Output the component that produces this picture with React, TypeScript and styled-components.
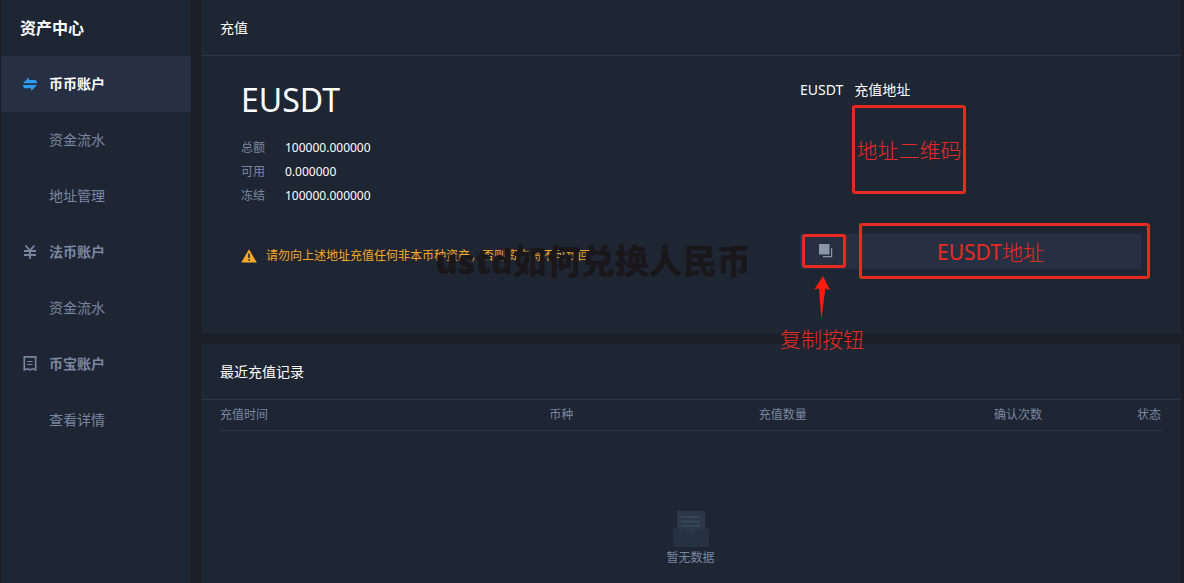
import React from "react";
import styled, { createGlobalStyle } from "styled-components";

const color = {
  page: "#1b1e27",
  panel: "#1e2634",
  raised: "#263042",
  line: "#2a3646",
  muted: "#7a86a0",
  text: "#ffffff",
  warn: "#f9a825",
  mark: "#ea2a20",
};

const markFont = `"Noto Sans", "Noto Sans CJK SC Light", "Noto Sans CJK SC", sans-serif`;

const GlobalStyle = createGlobalStyle`
  * { box-sizing: border-box; }
  body {
    margin: 0;
    background: ${color.page};
    color: ${color.text};
    font-family: "Noto Sans", "Noto Sans CJK SC", sans-serif;
    font-size: 14px;
  }
`;

const Page = styled.div`
  display: flex;
  gap: 10px;
  min-height: 100vh;
  padding: 0 3px 0 1px;
`;

const Sidebar = styled.nav`
  flex: 0 0 190px;
  background: ${color.panel};
`;

const SidebarTitle = styled.h1`
  margin: 0;
  padding-left: 19px;
  font-size: 16px;
  font-weight: 700;
  line-height: 56px;
`;

const NavItem = styled.a<{ $active?: boolean; $sub?: boolean }>`
  display: flex;
  align-items: center;
  gap: 12px;
  height: 56px;
  padding-bottom: 1px;
  padding-left: ${(p) => (p.$sub ? 48 : 22)}px;
  background: ${(p) => (p.$active ? color.raised : "transparent")};
  color: ${(p) => (p.$active ? color.text : color.muted)};
  font-weight: ${(p) => (p.$sub ? 400 : 700)};
  line-height: 20px;
  text-decoration: none;
`;

const Main = styled.main`
  flex: 1;
  min-width: 0;
  display: flex;
  flex-direction: column;
  gap: 10px;
`;

const Panel = styled.section<{ $grow?: boolean }>`
  flex: ${(p) => (p.$grow ? "1 0 auto" : "0 0 auto")};
  background: ${color.panel};
`;

const PanelTitle = styled.h2`
  margin: 0;
  padding: 0 19px;
  border-bottom: 1px solid ${color.line};
  font-size: 14px;
  font-weight: 400;
  line-height: 55px;
`;

const Deposit = styled.div`
  display: flex;
  justify-content: space-between;
  padding: 24px 40px 65px;
`;

const Coin = styled.h3`
  margin: 0 0 16px;
  font-size: 32px;
  font-weight: 400;
  line-height: 40px;
`;

const Balances = styled.dl`
  display: grid;
  grid-template-columns: 44px auto;
  margin: 0;
  font-size: 12px;
  line-height: 24px;
  dt { color: ${color.muted}; }
  dd { margin: 0; }
`;

const Warning = styled.p`
  position: relative;
  display: flex;
  align-items: center;
  gap: 9px;
  margin: 36px 0 0;
  color: ${color.warn};
  font-size: 12px;
  line-height: 24px;
  white-space: nowrap;
`;

const Watermark = styled.span`
  position: absolute;
  left: 194px;
  top: -8px;
  color: #1a171b;
  font-size: 34px;
  font-weight: 900;
  line-height: 50px;
`;

const AddressColumn = styled.div`
  flex: 0 0 341px;
  min-width: 0;
`;

const Caption = styled.div`
  display: flex;
  gap: 11px;
  line-height: 20px;
`;

const MarkText = styled.span`
  color: ${color.mark};
  font-family: ${markFont};
  font-size: 21px;
  line-height: 30px;
  white-space: nowrap;
`;

const QrFrame = styled.div`
  display: flex;
  align-items: center;
  justify-content: center;
  width: 114px;
  height: 89px;
  margin: 5px 0 40px 52px;
  border: 3px solid ${color.mark};
  border-radius: 3px;
`;

const AddressRow = styled.div`
  position: relative;
  display: flex;
  height: 35px;
  background: ${color.raised};
`;

const CopyButton = styled.button`
  display: flex;
  flex: 0 0 44px;
  align-items: center;
  justify-content: center;
  height: 34px;
  margin-left: 2px;
  padding: 0 0 0 4px;
  border: 3px solid ${color.mark};
  border-radius: 3px;
  background: none;
  cursor: pointer;
`;

const AddressInput = styled.input`
  flex: 1;
  min-width: 0;
  padding: 0 30px 2px 24px;
  border: 0;
  outline: 0;
  background: none;
  color: ${color.mark};
  font-family: ${markFont};
  font-size: 21px;
  text-align: center;
`;

const AddressFrame = styled.div`
  position: absolute;
  inset: -11px -9px -10px 59px;
  border: 3px solid ${color.mark};
  border-radius: 3px;
  pointer-events: none;
`;

const CopyNote = styled.div`
  position: absolute;
  top: 42px;
  left: -20px;
  display: flex;
  flex-direction: column;
  align-items: center;
  gap: 5px;
`;

const TableWrap = styled.div`
  padding: 0 20px 0 19px;
`;

const Records = styled.table`
  width: 100%;
  table-layout: fixed;
  border-spacing: 0;
  font-size: 12px;
`;

const HeadCell = styled.th<{ $width?: string; $end?: boolean }>`
  width: ${(p) => p.$width ?? "auto"};
  height: 31px;
  padding: 0;
  border-bottom: 1px solid ${color.line};
  color: ${color.muted};
  font-weight: 400;
  line-height: 18px;
  text-align: ${(p) => (p.$end ? "right" : "left")};
`;

const Empty = styled.div`
  display: flex;
  flex-direction: column;
  align-items: center;
  padding: 80px 0 14px;
  color: ${color.muted};
  font-size: 12px;
  line-height: 22px;
`;

const TransferIcon = () => (
  <svg width="14" height="14" viewBox="0 0 14 14" fill="#2e9df0" aria-hidden="true">
    <path d="M0 6.3 L5.8 0.2 V3 H12.4 L14 4.4 V6.3Z" />
    <path d="M14 7.9 L8.2 14 V11.2 H1.6 L0 9.6 V7.9Z" />
  </svg>
);

const YenIcon = () => (
  <svg width="14" height="14" viewBox="0 0 14 14" fill="none" stroke={color.muted} strokeWidth="1.8" aria-hidden="true">
    <path d="M2.5 0.5 L7 5.5 L11.5 0.5 M7 5.5 V14.5 M1 6 H13 M1 10 H13" />
  </svg>
);

const ReceiptIcon = () => (
  <svg width="14" height="15" viewBox="0 0 14 15" fill="none" stroke={color.muted} aria-hidden="true">
    <path strokeWidth="1.6" d="M1.3 0.9 H12.7 V14 L9.8 12.8 L7 13.8 L4.2 12.8 L1.3 14Z" />
    <path strokeWidth="1.2" d="M4.2 5.5 H9.6 M4.2 8.5 H9.6" />
  </svg>
);

const WarningIcon = () => (
  <svg width="16" height="14" viewBox="0 0 16 14" aria-hidden="true">
    <path fill={color.warn} d="M8 0.3 L15.8 13.6 H0.2Z" />
    <path fill={color.panel} d="M7.2 4.6 H8.8 V9 H7.2Z M7.2 10.2 H8.8 V11.8 H7.2Z" />
  </svg>
);

const CopyIcon = () => (
  <svg width="14" height="14" viewBox="0 0 14 14" aria-hidden="true">
    <path fill="#8a95a9" d="M0 0 H10.5 V10.5 H0Z M12 4 H13.2 V13.2 H4 V12 H12Z" />
  </svg>
);

const ArrowIcon = () => (
  <svg width="16" height="43" viewBox="0 0 16 43" aria-hidden="true">
    <path fill="#ff1d10" d="M9 0 L16 14 L11.4 12.4 L7.3 43 L5 12.2 L0.3 13.6Z" />
  </svg>
);

const EmptyIcon = () => (
  <svg width="36" height="36" viewBox="0 0 36 36" aria-hidden="true">
    <path fill="#2c384a" d="M4 0 H32 V23 H4Z" />
    <path stroke="#3b495d" strokeWidth="1.4" d="M8 6 H27 M8 10.5 H27 M8 15 H27" />
    <path fill="#263142" d="M0 18 H12 L15 22 H21 L24 18 H36 V36 H0Z" />
  </svg>
);

const columns = [
  { label: "充值时间", width: "35%" },
  { label: "币种", width: "22.25%" },
  { label: "充值数量", width: "25%" },
  { label: "确认次数" },
  { label: "状态", end: true },
];

export default function App() {
  return (
    <>
      <GlobalStyle />
      <Page>
        <Sidebar>
          <SidebarTitle>资产中心</SidebarTitle>
          <NavItem href="#exchange" $active><TransferIcon />币币账户</NavItem>
          <NavItem href="#exchange-flow" $sub>资金流水</NavItem>
          <NavItem href="#addresses" $sub>地址管理</NavItem>
          <NavItem href="#fiat"><YenIcon />法币账户</NavItem>
          <NavItem href="#fiat-flow" $sub>资金流水</NavItem>
          <NavItem href="#savings"><ReceiptIcon />币宝账户</NavItem>
          <NavItem href="#details" $sub>查看详情</NavItem>
        </Sidebar>
        <Main>
          <Panel>
            <PanelTitle>充值</PanelTitle>
            <Deposit>
              <div>
                <Coin>EUSDT</Coin>
                <Balances>
                  <dt>总额</dt><dd>100000.000000</dd>
                  <dt>可用</dt><dd>0.000000</dd>
                  <dt>冻结</dt><dd>100000.000000</dd>
                </Balances>
                <Warning>
                  <WarningIcon />
                  请勿向上述地址充值任何非本币种资产，否则资产将不可找回
                  <Watermark>ustd如何兑换人民币</Watermark>
                </Warning>
              </div>
              <AddressColumn>
                <Caption>
                  <span>EUSDT</span>
                  <label htmlFor="address">充值地址</label>
                </Caption>
                <QrFrame><MarkText>地址二维码</MarkText></QrFrame>
                <AddressRow>
                  <CopyButton type="button" aria-label="复制按钮"><CopyIcon /></CopyButton>
                  <AddressInput id="address" readOnly value="EUSDT地址" />
                  <AddressFrame />
                  <CopyNote>
                    <ArrowIcon />
                    <MarkText>复制按钮</MarkText>
                  </CopyNote>
                </AddressRow>
              </AddressColumn>
            </Deposit>
          </Panel>
          <Panel $grow>
            <PanelTitle>最近充值记录</PanelTitle>
            <TableWrap>
              <Records>
                <thead>
                  <tr>
                    {columns.map((c) => (
                      <HeadCell key={c.label} scope="col" $width={c.width} $end={c.end}>{c.label}</HeadCell>
                    ))}
                  </tr>
                </thead>
              </Records>
              <Empty>
                <EmptyIcon />
                暂无数据
              </Empty>
            </TableWrap>
          </Panel>
        </Main>
      </Page>
    </>
  );
}
